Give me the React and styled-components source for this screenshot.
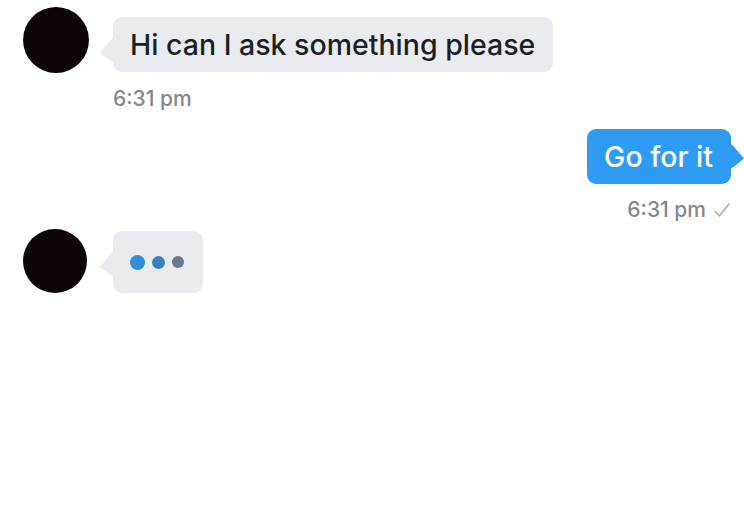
import React from "react";
import styled, { createGlobalStyle } from "styled-components";

const Global = createGlobalStyle`
  html, body { margin: 0; padding: 0; background: #ffffff; }
  body { font-family: Inter, "Liberation Sans", Arial, sans-serif; -webkit-font-smoothing: antialiased; }
`;

const Page = styled.div`
  width: 744px;
  height: 511px;
  background: #fff;
  display: flex;
  flex-direction: column;
  overflow: hidden;
`;

const IncomingRow = styled.div`
  display: grid;
  grid-template-columns: 66px auto;
  column-gap: 24px;
  justify-content: start;
  padding-left: 23px;
  margin-top: ${(p) => p.$top}px;
`;

const Avatar = styled.div`
  width: ${(p) => p.$size}px;
  height: ${(p) => p.$size}px;
  border-radius: 50%;
  background: #0d0405;
  margin-top: ${(p) => p.$offset || 0}px;
`;

const Bubble = styled.div`
  position: relative;
  justify-self: ${(p) => (p.$out ? "end" : "start")};
  height: ${(p) => p.$h || 55}px;
  box-sizing: border-box;
  padding: 0 ${(p) => p.$pr || 18}px 0 17px;
  display: flex;
  align-items: center;
  gap: 7px;
  border-radius: 9px;
  background: ${(p) => (p.$out ? "#2f9cf3" : "#e9ebef")};
  color: ${(p) => (p.$out ? "#ffffff" : "#1c1f25")};
  font-size: 28.5px;
  font-weight: 500;
  white-space: nowrap;
  margin-top: ${(p) => p.$offset || 0}px;
  &::before {
    content: "";
    position: absolute;
    top: ${(p) => (p.$out ? 14 : 20)}px;
    ${(p) => (p.$out ? "right: -13px;" : "left: -13px;")}
    width: 14px;
    height: 26px;
    background: inherit;
    clip-path: ${(p) =>
      p.$out
        ? "polygon(0 0, 30% 15%, 100% 60%, 30% 90%, 0 100%)"
        : "polygon(100% 0, 70% 15%, 0 62%, 70% 90%, 100% 100%)"};
  }
`;

const Stamp = styled.div`
  grid-column: 2;
  justify-self: start;
  display: flex;
  align-items: center;
  gap: 7px;
  margin-top: 13px;
  font-size: 21px;
  font-weight: 500;
  color: #82878e;
`;

const OutgoingRow = styled.div`
  display: flex;
  flex-direction: column;
  align-items: flex-end;
  padding-right: 13px;
  margin-top: ${(p) => p.$top}px;
`;

const OutStamp = styled(Stamp)`
  margin-top: 13px;
`;

const Check = styled.svg`
  width: 18px;
  height: 16px;
`;

const Dot = styled.span`
  width: ${(p) => p.$d}px;
  height: ${(p) => p.$d}px;
  border-radius: 50%;
  background: ${(p) => p.$c};
`;

export default function App() {
  return (
    <Page>
      <Global />
      <IncomingRow $top={7}>
        <Avatar $size={66} />
        <Bubble $offset={10}>Hi can I ask something please</Bubble>
        <Stamp>6:31 pm</Stamp>
      </IncomingRow>
      <OutgoingRow $top={18}>
        <Bubble $out>Go for it</Bubble>
        <OutStamp>
          6:31 pm
          <Check viewBox="0 0 18 16">
            <path d="M2 9.5 L6.5 14 L16 2" fill="none" stroke="#a9adb2" strokeWidth="1.6" strokeLinecap="round" strokeLinejoin="round" />
          </Check>
        </OutStamp>
      </OutgoingRow>
      <IncomingRow $top={7}>
        <Avatar $size={64} $offset={0} />
        <Bubble $h={62} $offset={2} $pr={19}>
          <Dot $d={15} $c="#2f8fd6" />
          <Dot $d={13} $c="#3b80ba" />
          <Dot $d={12} $c="#69788a" />
        </Bubble>
      </IncomingRow>
    </Page>
  );
}
